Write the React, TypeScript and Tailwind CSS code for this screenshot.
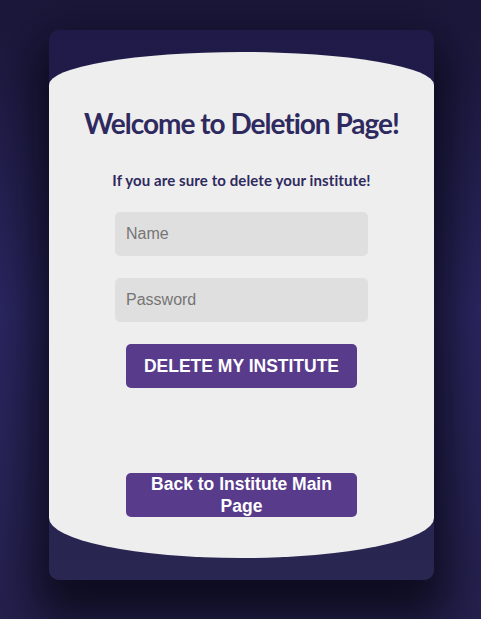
export default function App() {
  return (
    <main className="min-h-[619px] w-full bg-[linear-gradient(180deg,#1a1739_0%,#2b2762_50%,#25214e_100%)] pt-[30px] pb-[39px] pl-[2px] flex justify-center">
      <div className="w-[385px] h-[550px] rounded-[10px] bg-gradient-to-b from-[#1f1a47] to-[#2a2652] shadow-[0_25px_45px_15px_rgba(5,5,15,0.75)] py-[22px]">
        <div className="h-full bg-[#eeeeee] rounded-[50%_50%_50%_50%/33px_33px_40px_40px] pt-[54px] flex flex-col items-center">
          <h1 className="font-['Lato',sans-serif] font-bold text-[28px] leading-[34px] tracking-[-1px] text-[#2e2a60]">
            Welcome to Deletion Page!
          </h1>
          <p className="mt-[30px] font-['Lato',sans-serif] font-bold text-[15px] leading-[20px] tracking-[0.1px] text-[#2e2a60]">
            If you are sure to delete your institute!
          </p>
          <form className="mt-[22px] flex flex-col items-center">
            <input
              type="text"
              placeholder="Name"
              className="w-[253px] h-[44px] rounded-[5px] bg-[#e0dfdf] px-[11px] font-['Liberation_Sans',Arial,sans-serif] text-[16px] text-[#333] placeholder:text-[#757575] outline-none"
            />
            <input
              type="password"
              placeholder="Password"
              className="mt-[22px] w-[253px] h-[44px] rounded-[5px] bg-[#e0dfdf] px-[11px] font-['Liberation_Sans',Arial,sans-serif] text-[16px] text-[#333] placeholder:text-[#757575] outline-none"
            />
            <button
              type="button"
              className="mt-[22px] w-[231px] h-[44px] rounded-[5px] bg-[#583b8b] text-white font-['Liberation_Sans',Arial,sans-serif] font-bold text-[17.5px] uppercase"
            >
              Delete my institute
            </button>
          </form>
          <button
            type="button"
            className="mt-[85px] w-[231px] h-[44px] rounded-[5px] bg-[#583b8b] px-[20px] text-white font-['Liberation_Sans',Arial,sans-serif] font-bold text-[17.5px] leading-[22px]"
          >
            Back to Institute Main Page
          </button>
        </div>
      </div>
    </main>
  );
}
